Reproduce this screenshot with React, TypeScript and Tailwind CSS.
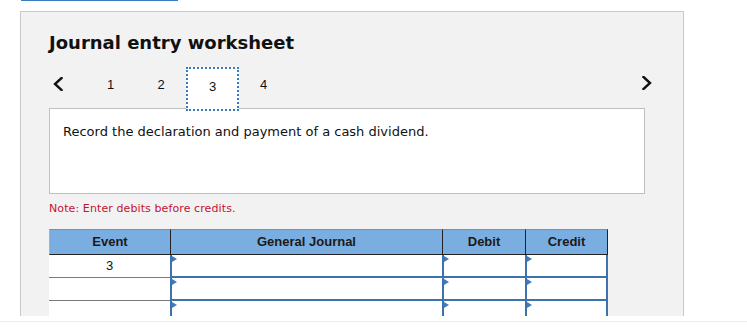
import React from 'react';

const tabs = [
  { label: '1', w: 'w-[51px]' },
  { label: '2', w: 'w-[50px]' },
  { label: '3', w: 'w-[53px]', active: true },
  { label: '4', w: 'w-[49px]' },
];

const rows = ['3', '', ''];

function Chevron({ dir }: { dir: 'left' | 'right' }) {
  return (
    <svg width="10" height="14" viewBox="0 0 10 14" className="block">
      <polyline
        points={dir === 'left' ? '8.5,1 2,7 8.5,13' : '1.5,1 8,7 1.5,13'}
        fill="none"
        stroke="#111"
        strokeWidth="2.4"
        strokeLinecap="square"
      />
    </svg>
  );
}

function InputCell({ w, last }: { w: string; last?: boolean }) {
  return (
    <td className={`p-0 ${w}`}>
      <div className={`relative h-[23px] bg-white border-l-2 border-b-2 border-[#3e72aa] ${last ? 'border-r-2' : ''}`}>
        <span className="absolute left-0 top-[1px] w-0 h-0 border-y-[3px] border-y-transparent border-l-[5px] border-l-[#3d7cc4]" />
      </div>
    </td>
  );
}

export default function App() {
  return (
    <div className="w-[747px] h-[328px] bg-white overflow-hidden font-['DejaVu_Sans',Verdana,sans-serif] text-[#111]">
      <div className="h-[316px] overflow-hidden">
        <div className="ml-[21px] w-[157px] h-px bg-[#3b7cc0]" />
        <div className="ml-[20px] mt-[10px] w-[664px] h-[400px] bg-[#f2f2f2] border border-[#c8c8c8] pl-[28px]">
          <h1 className="mt-[20px] text-[18px] leading-[22px] font-bold">Journal entry worksheet</h1>

          {/* step navigation */}
          <div className="mt-[13px] flex items-start h-[44px] w-[634px]">
            <div className="w-[36px] h-[44px] pl-[4px] pt-[10px] cursor-pointer">
              <Chevron dir="left" />
            </div>
            {tabs.map((t) => (
              <div
                key={t.label}
                className={`${t.w} h-[44px] text-center pt-[10px] text-[13px] leading-[16px] font-['Liberation_Sans',Arial,sans-serif] ${
                  t.active ? 'relative z-10 bg-white border-2 border-dotted border-[#3b79bd] pt-[8px]' : ''
                }`}
              >
                {t.label}
              </div>
            ))}
            <div className="ml-auto mr-[31px] h-[44px] pt-[9px] cursor-pointer">
              <Chevron dir="right" />
            </div>
          </div>

          <div className="-mt-[3px] w-[596px] h-[86px] bg-white border border-[#c0c0c0] pl-[13px] pt-[15px]">
            <p className="text-[13px] leading-[16px]">Record the declaration and payment of a cash dividend.</p>
          </div>

          <p className="mt-[8px] text-[11px] leading-[14px] tracking-[0.1px] text-[#c4122f]">Note: Enter debits before credits.</p>

          <table className="mt-[13px] w-[559px] table-fixed border-separate border-spacing-0 font-['Liberation_Sans',Arial,sans-serif] text-[13px]">
            <thead>
              <tr className="bg-[#7aaee1] text-[#1a1a1a]">
                <th className="w-[121px] h-[26px] p-0 font-bold border-t border-b border-l border-t-[#8c8c8c] border-l-[#b0b0b0] border-b-[#222]">Event</th>
                <th className="w-[272px] h-[26px] p-0 font-bold border-t border-b border-l border-t-[#8c8c8c] border-l-[#222] border-b-[#222]">General Journal</th>
                <th className="w-[83px] h-[26px] p-0 font-bold border-t border-b border-l border-t-[#8c8c8c] border-l-[#222] border-b-[#222]">Debit</th>
                <th className="w-[83px] h-[26px] p-0 font-bold border-t border-b border-l border-r border-t-[#8c8c8c] border-x-[#222] border-b-[#222]">Credit</th>
              </tr>
            </thead>
            <tbody>
              {rows.map((ev, i) => (
                <tr key={i}>
                  <td className="w-[121px] h-[23px] p-0 bg-white text-center text-[#111] border-b border-[#7a7a7a]">{ev}</td>
                  <InputCell w="w-[272px]" />
                  <InputCell w="w-[83px]" />
                  <InputCell w="w-[83px]" last />
                </tr>
              ))}
            </tbody>
          </table>
        </div>
      </div>
      <div className="mt-[5px] border-t border-[#ececec]" />
    </div>
  );
}
